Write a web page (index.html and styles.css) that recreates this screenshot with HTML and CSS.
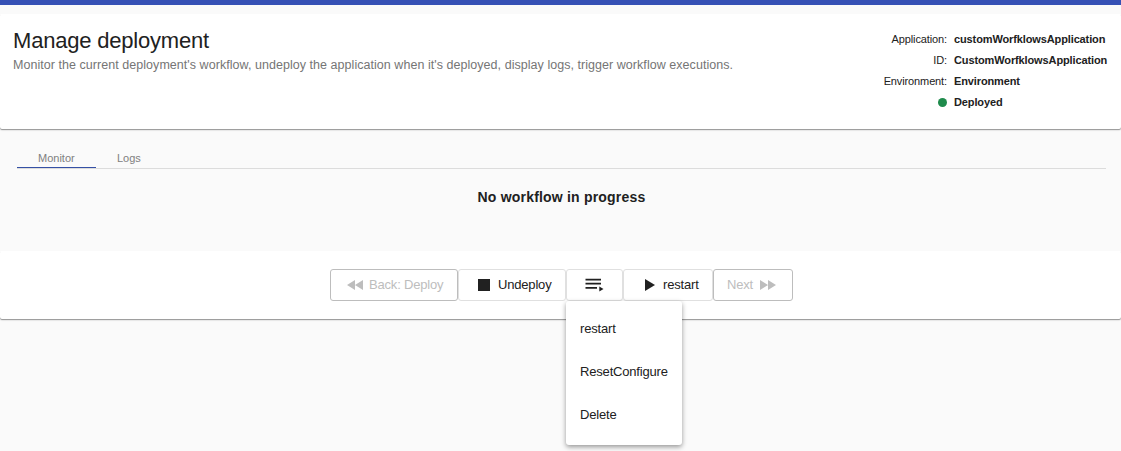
FILE: index.html
```html
<!DOCTYPE html>
<html lang="en">
<head>
<meta charset="utf-8">
<title>Manage deployment</title>
<link rel="stylesheet" href="styles.css">
</head>
<body>
<div class="topbar"></div>
<header class="card header">
  <div class="heading">
    <h1><span>Manage deployment</span></h1>
    <p><span class="subtitle">Monitor the current deployment's workflow, undeploy the application when it's deployed, display logs, trigger workflow executions.</span></p>
  </div>
  <dl class="meta">
    <dt>Application:</dt><dd>customWorfklowsApplication</dd>
    <dt>ID:</dt><dd class="id">CustomWorfklowsApplication</dd>
    <dt>Environment:</dt><dd>Environment</dd>
    <dt><span class="dot"></span></dt><dd>Deployed</dd>
  </dl>
</header>
<main class="monitor">
  <nav class="tabs"><a class="tab active">Monitor</a><a class="tab">Logs</a></nav>
  <p class="status">No workflow in progress</p>
</main>
<footer class="card actions">
  <button class="btn disabled back"><svg width="16" height="10" viewBox="0 0 16 10"><path d="M8 0v10L0 5zM16 0v10L8 5z"/></svg><span>Back: Deploy</span></button>
  <button class="btn undeploy"><svg width="12" height="12" viewBox="0 0 12 12"><path d="M0 0h12v12H0z"/></svg><span>Undeploy</span></button>
  <div class="menu-anchor">
    <button class="btn more" aria-label="Workflows"><svg width="19" height="14" viewBox="0 0 19 14"><path d="M.5.700h15.500v1.700H.5zM.5 4.700h15.500v1.700H.5zM.5 9h11.500v1.700H.5zM14.300 8.500l4.200 2.500-4.200 2.500z"/></svg></button>
    <ul class="menu"><li>restart</li><li>ResetConfigure</li><li>Delete</li></ul>
  </div>
  <button class="btn restart"><svg width="10" height="12" viewBox="0 0 10 12"><path d="M0 0l10 6-10 6z"/></svg><span>restart</span></button>
  <button class="btn disabled next"><span>Next</span><svg width="16" height="10" viewBox="0 0 16 10"><path d="M0 0l8 5-8 5zM8 0l8 5-8 5z"/></svg></button>
</footer>
</body>
</html>
```
FILE: styles.css
```css
* { box-sizing: border-box; }
body { margin: 0; height: 451px; overflow: hidden; background: #fafafa; color: #212121; font-family: "Liberation Sans", Arial, sans-serif; }
h1, p, dl, dd, ul { margin: 0; padding: 0; }
.topbar { height: 5px; background: #3550b5; }
.card { background: #fff; border-radius: 2px; box-shadow: 0 1px 0 #9e9e9e, 0 2px 1px rgba(0,0,0,.08); }
.header { display: flex; justify-content: space-between; height: 115px; margin-top: 9px; padding: 15px 14px 0 13px; }
h1 { font-size: 22px; line-height: 24px; font-weight: 400; letter-spacing: -.2px; }
.heading p { margin-top: 4px; font-size: 12.500px; line-height: 16px; letter-spacing: .045px; color: #757575; white-space: nowrap; }
.meta { display: grid; grid-template-columns: 64px 153px; grid-auto-rows: 21px; column-gap: 7px; font-size: 11px; line-height: 21px; letter-spacing: -.12px; white-space: nowrap; }
.meta dt { display: flex; justify-content: flex-end; align-items: center; }
.meta dd { font-weight: 700; }
.dot { width: 9px; height: 9px; border-radius: 50%; background: #1f8b4c; }
.monitor { height: 122px; padding: 20px 15px 0 17px; }
.tabs { display: flex; height: 20px; border-bottom: 1px solid #dcdcdc; font-size: 11px; color: #808080; }
.tab { height: 19px; padding: 0 21px; line-height: 18px; border-bottom: 1px solid transparent; }
.tab.active { width: 79px; border-color: #3550a5; }
.status { margin-top: 19px; text-align: center; font-size: 14px; line-height: 18px; font-weight: 700; letter-spacing: .2px; }
.actions { display: flex; justify-content: center; height: 68px; padding: 18px 0 0 2px; }
.btn { display: flex; align-items: center; height: 32px; padding: 0; border: 1px solid #e0e0e0; border-radius: 3px; background: #fff; color: #212121; font: 13px "Liberation Sans", Arial, sans-serif; letter-spacing: -.18px; white-space: nowrap; }
.btn span { padding-bottom: 2px; }
.btn svg { flex: none; fill: currentColor; }
.btn.disabled { border-color: #bdbdbd; color: #bdbdbd; }
.back { width: 128px; padding-left: 16px; gap: 6px; }
.undeploy { width: 108px; padding-left: 19px; gap: 8px; }
.more { width: 57px; padding-left: 18px; }
.restart { width: 90px; padding-left: 21px; gap: 8px; }
.next { width: 80px; padding-left: 13px; gap: 7px; }
.menu-anchor { position: relative; }
.menu { position: absolute; top: 32px; left: 0; width: 116px; height: 144px; padding: 6px 0; background: #fff; border-radius: 3px; box-shadow: 0 2px 5px rgba(0,0,0,.4); list-style: none; font-size: 13px; letter-spacing: -.18px; }
.menu li { height: 43px; padding-left: 14px; line-height: 43px; }
```
